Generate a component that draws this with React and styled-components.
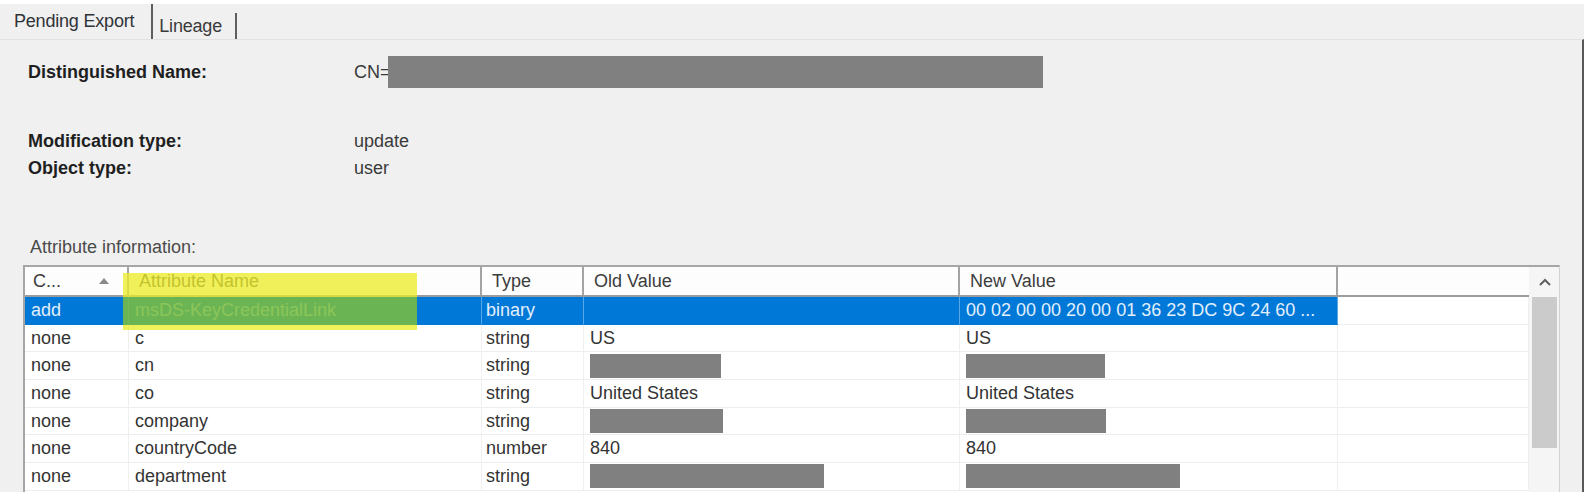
import React from 'react';
import styled, { createGlobalStyle } from 'styled-components';

const GlobalStyle = createGlobalStyle`
  html, body {
    margin: 0;
    padding: 0;
    background: #ffffff;
    overflow: hidden;
  }
  body {
    font-family: "Liberation Sans", Arial, sans-serif;
  }
`;

const columns = '104px 353px 102px 376px 378px 1fr';

const attributes = [
  {
    change: 'add',
    name: 'msDS-KeyCredentialLink',
    type: 'binary',
    oldValue: '',
    newValue: '00 02 00 00 20 00 01 36 23 DC 9C 24 60 ...',
    selected: true,
  },
  { change: 'none', name: 'c', type: 'string', oldValue: 'US', newValue: 'US' },
  { change: 'none', name: 'cn', type: 'string', oldRedact: 131, newRedact: 139 },
  { change: 'none', name: 'co', type: 'string', oldValue: 'United States', newValue: 'United States' },
  { change: 'none', name: 'company', type: 'string', oldRedact: 133, newRedact: 140 },
  { change: 'none', name: 'countryCode', type: 'number', oldValue: '840', newValue: '840' },
  { change: 'none', name: 'department', type: 'string', oldRedact: 234, newRedact: 214 },
];

const App = () => {
  return (
    <>
      <GlobalStyle />
      <Window>
        <TabStrip>
          <Tab $active>Pending Export</Tab>
          <Tab>Lineage</Tab>
        </TabStrip>
        <Page>
          <DnRow>
            <Label>Distinguished Name:</Label>
            <Value>
              CN=
              <Redact $w={655} $h={32} $overlap />
            </Value>
          </DnRow>
          <Fields>
            <FieldRow>
              <Label>Modification type:</Label>
              <Value>update</Value>
            </FieldRow>
            <FieldRow>
              <Label>Object type:</Label>
              <Value>user</Value>
            </FieldRow>
          </Fields>
          <SectionLabel>Attribute information:</SectionLabel>
          <ListView>
            <ListMain>
              <HeaderRow>
                <HeaderCell $sort>
                  C...
                  <SortArrow viewBox="0 0 10 6">
                    <polygon points="0,6 5,0 10,6" />
                  </SortArrow>
                </HeaderCell>
                <HeaderCell>Attribute Name</HeaderCell>
                <HeaderCell>Type</HeaderCell>
                <HeaderCell>Old Value</HeaderCell>
                <HeaderCell>New Value</HeaderCell>
                <HeaderCell $last />
              </HeaderRow>
              {attributes.map((a) => (
                <Row key={a.name}>
                  <Cell $selected={a.selected}>{a.change}</Cell>
                  <Cell $selected={a.selected}>{a.name}</Cell>
                  <Cell $selected={a.selected} $tight>{a.type}</Cell>
                  <Cell $selected={a.selected}>
                    {a.oldRedact ? <Redact $w={a.oldRedact} $h={24} /> : a.oldValue}
                  </Cell>
                  <Cell $selected={a.selected}>
                    {a.newRedact ? <Redact $w={a.newRedact} $h={24} /> : a.newValue}
                  </Cell>
                  <Cell />
                </Row>
              ))}
            </ListMain>
            <ScrollBar>
              <ScrollButton>
                <svg width="12" height="8" viewBox="0 0 12 8">
                  <polyline points="1,7 6,2 11,7" fill="none" stroke="#5f5f5f" strokeWidth="2" />
                </svg>
              </ScrollButton>
              <Thumb />
            </ScrollBar>
            <Highlighter />
          </ListView>
        </Page>
      </Window>
    </>
  );
};

export default App;

const Window = styled.div`
  width: 1584px;
  height: 488px;
  margin-top: 4px;
  display: flex;
  flex-direction: column;
  background: #f0f0f0;
  overflow: hidden;
`;

const TabStrip = styled.div`
  display: flex;
  align-items: flex-end;
  height: 35px;
  padding-left: 8px;
  flex-shrink: 0;
`;

const Tab = styled.div`
  display: flex;
  align-items: center;
  box-sizing: border-box;
  font-size: 18px;
  letter-spacing: -0.2px;
  color: ${({ $active }) => ($active ? '#2f3338' : '#3a3a3a')};
  height: ${({ $active }) => ($active ? '35px' : '26px')};
  padding: ${({ $active }) => ($active ? '0 17px 0 6px' : '0 13px 0 6px')};
  border-right: 2px solid #5e5e5e;
  white-space: nowrap;
`;

const Page = styled.div`
  flex: 1;
  border-top: 1px solid #e2e2e2;
  border-right: 2px solid #585858;
  padding-left: 23px;
  display: flex;
  flex-direction: column;
  overflow: hidden;
`;

const DnRow = styled.div`
  display: flex;
  align-items: center;
  height: 32px;
  margin-top: 16px;
`;

const Fields = styled.div`
  margin-top: 39.5px;
  display: flex;
  flex-direction: column;
`;

const FieldRow = styled.div`
  display: flex;
  align-items: center;
  height: 27px;
`;

const Label = styled.div`
  width: 326px;
  padding-left: 5px;
  font-size: 18px;
  font-weight: bold;
  color: #1f1f1f;
`;

const Value = styled.div`
  display: flex;
  align-items: center;
  font-size: 18px;
  color: #3a3a3a;
`;

const Redact = styled.span`
  display: inline-block;
  width: ${({ $w }) => $w}px;
  height: ${({ $h }) => $h}px;
  background: #808080;
  margin-left: ${({ $overlap }) => ($overlap ? '-3px' : '0')};
`;

const SectionLabel = styled.div`
  margin-top: 54.5px;
  padding-left: 7px;
  height: 22px;
  line-height: 22px;
  font-size: 18px;
  color: #4a4a4a;
`;

const ListView = styled.div`
  position: relative;
  margin-top: 7px;
  width: 1537px;
  height: 240px;
  box-sizing: border-box;
  border-top: 2px solid #a6a6a6;
  border-left: 2px solid #a6a6a6;
  border-right: 1px solid #d2d2d2;
  background: #ffffff;
  display: flex;
  flex-shrink: 0;
`;

const ListMain = styled.div`
  flex: 1;
  display: flex;
  flex-direction: column;
`;

const HeaderRow = styled.div`
  display: grid;
  grid-template-columns: ${columns};
  height: 30px;
  box-sizing: border-box;
  border-bottom: 2px solid #9c9c9c;
  background: #fdfdfd;
`;

const HeaderCell = styled.div`
  display: flex;
  align-items: center;
  justify-content: ${({ $sort }) => ($sort ? 'space-between' : 'flex-start')};
  padding: ${({ $sort }) => ($sort ? '0 18px 0 8px' : '0 0 0 10px')};
  font-size: 18px;
  color: #3c3c3c;
  border-right: ${({ $last }) => ($last ? 'none' : '2px solid #a4a4a4')};
  white-space: nowrap;
  overflow: hidden;
`;

const SortArrow = styled.svg`
  width: 10px;
  height: 6px;
  fill: #8a8a8a;
`;

const Row = styled.div`
  display: grid;
  grid-template-columns: ${columns};
  height: 27.7px;
`;

const Cell = styled.div`
  display: flex;
  align-items: center;
  box-sizing: border-box;
  padding-left: ${({ $tight }) => ($tight ? '4px' : '6px')};
  font-size: 18px;
  white-space: nowrap;
  overflow: hidden;
  color: ${({ $selected }) => ($selected ? '#e2effc' : '#333333')};
  background: ${({ $selected }) => ($selected ? '#0078d7' : 'transparent')};
  border-right: 1px solid
    ${({ $selected }) => ($selected ? 'rgba(255, 255, 255, 0.35)' : '#efefef')};
  border-bottom: 1px solid ${({ $selected }) => ($selected ? '#0078d7' : '#eeeeee')};
`;

const ScrollBar = styled.div`
  width: 30px;
  display: flex;
  flex-direction: column;
  background: #f5f5f5;
`;

const ScrollButton = styled.div`
  height: 30px;
  display: flex;
  align-items: center;
  justify-content: center;
  padding-left: 2px;
`;

const Thumb = styled.div`
  height: 151px;
  margin: 0 2px 0 3px;
  background: #cbcbcb;
`;

const Highlighter = styled.div`
  position: absolute;
  left: 98px;
  top: 6px;
  width: 294px;
  height: 57px;
  pointer-events: none;
  background: linear-gradient(
    to bottom,
    rgba(236, 236, 40, 0.76) 0,
    rgba(236, 236, 40, 0.76) 24px,
    rgba(124, 190, 62, 0.86) 24px,
    rgba(124, 190, 62, 0.86) 51.7px,
    rgba(236, 236, 40, 0.76) 51.7px
  );
`;
